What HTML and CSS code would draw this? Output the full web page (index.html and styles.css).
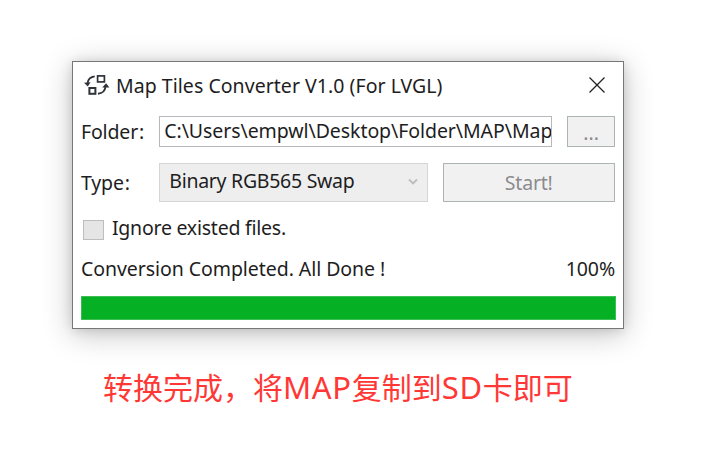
FILE: index.html
```html
<!DOCTYPE html>
<html lang="zh-CN">
<head>
<meta charset="utf-8">
<title>Map Tiles Converter</title>
<link rel="stylesheet" href="styles.css">
</head>
<body>
<main class="window">
  <header class="titlebar">
    <svg class="app-icon" width="26" height="22" viewBox="0 0 26 22" fill="none" stroke="#30323a">
      <rect x="13.6" y="1.9" width="6.8" height="6" stroke-width="1.7"/>
      <rect x="5.4" y="14" width="6" height="5.8" stroke-width="2"/>
      <path d="M10.7 2.4C6.7 2.9 4.1 5.2 3.6 9M14 19.7C18.1 19.4 21 16.7 21.4 13" stroke-width="1.9"/>
      <path d="M0 8.8L6.6 8.3L3.8 12.4ZM18.2 13.4L22.1 9.3L25.4 13.4Z" fill="#30323a" stroke="none"/>
    </svg>
    <span class="title">Map Tiles Converter V1.0 (For LVGL)</span>
    <svg class="close" width="16" height="16" viewBox="0 0 16 16" fill="none" stroke="#222" stroke-width="1.3"><path d="M.5.5l15 15M15.5.5l-15 15"/></svg>
  </header>
  <div class="row folder">
    <span class="label">Folder<span class="colon">:</span></span>
    <div class="path"><span>C:\Users\empwl\Desktop\Folder\MAP\Map</span></div>
    <div class="button browse">...</div>
  </div>
  <div class="row type">
    <span class="label type-label">Type<span class="colon">:</span></span>
    <div class="select"><span>Binary RGB565 Swap</span>
      <svg width="10" height="8" viewBox="0 0 10 8" fill="none" stroke="#bdbdbd" stroke-width="1.8"><path d="M1 1.5l4 4 4-4"/></svg>
    </div>
    <div class="button start">Start!</div>
  </div>
  <div class="check"><span class="box"></span><span class="check-text">Ignore existed files.</span></div>
  <div class="status"><span class="message">Conversion Completed. All Done !</span><span class="percent">100%</span></div>
  <div class="progress"></div>
</main>
<p class="caption">转换完成，将<span class="latin">MAP</span>复制到<span class="latin">SD</span>卡即可</p>
</body>
</html>
```
FILE: styles.css
```css
* { box-sizing: border-box; }
body {
  margin: 0;
  height: 460px;
  overflow: hidden;
  padding: 61px 0 0 72px;
  background: #fff;
  color: #1d1d22;
  font: 19.5px/26px "Noto Sans", "Noto Sans CJK SC", sans-serif;
  white-space: nowrap;
}
.window {
  width: 552px;
  height: 268px;
  border: 1px solid #777;
  background: #fff;
  padding: 0 8px;
  box-shadow: 0 5px 28px rgba(0,0,0,.24), 0 1px 10px rgba(0,0,0,.12);
}
.titlebar { display: flex; align-items: center; height: 48px; padding: 0 10px 0 3px; }
.app-icon { margin-top: -3px; }
.title { margin-left: 6px; letter-spacing: .04px; }
.close { margin-left: auto; margin-top: -2px; }
.row { display: flex; }
.folder { height: 31px; margin-top: 6px; }
.label { width: 78px; padding-top: 3px; letter-spacing: -.15px; }
.colon { margin-left: 1px; }
.path {
  width: 394px;
  border: 1px solid #b7b8be;
  padding: 1px 0 0 4px;
  overflow: hidden;
}
.path span { letter-spacing: -.07px; }
.button {
  display: flex;
  align-items: center;
  justify-content: center;
  border: 1px solid #adb4b4;
  background: #f1f1f1;
  color: #8b8b8e;
}
.browse { width: 48px; margin-left: 15px; padding-top: 2px; }
.type { height: 39px; margin-top: 16px; }
.type-label { padding-top: 7px; }
.select {
  display: flex;
  align-items: center;
  justify-content: space-between;
  width: 269px;
  border: 1px solid #d5d5d5;
  background: #eee;
  padding: 0 9px 4px 9px;
  letter-spacing: -.28px;
}
.select svg { margin-top: 3px; }
.start { width: 173px; margin-left: 15px; letter-spacing: -.2px; }
.path, .select { margin-left: .5px; }
.check { display: flex; align-items: center; height: 26px; margin-top: 13px; padding-left: 2px; }
.box { width: 21px; height: 20px; border: 1px solid #bdbdbd; background: #e5e5e5; margin-top: 3px; }
.check-text { margin-left: 8px; letter-spacing: -.24px; }
.status { display: flex; justify-content: space-between; margin-top: 15px; }
.message { letter-spacing: -.06px; }
.percent { letter-spacing: -.1px; }
.progress { width: 535px; height: 24px; margin-top: 14px; background: #06b025; border: 1px solid #3ebd55; }
.caption {
  margin: 39px 0 0 31px;
  color: #ff3835;
  font: 30px/36px "Noto Sans CJK SC", sans-serif;
}
.latin { font-family: "Noto Sans", sans-serif; font-size: 31px; letter-spacing: .7px; }
```
